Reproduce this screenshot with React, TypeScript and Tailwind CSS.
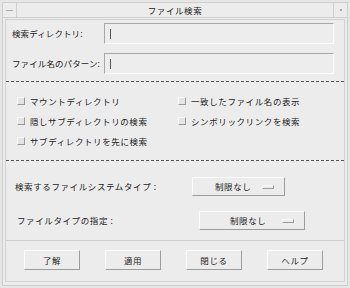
import React from 'react'

const font = { fontFamily: '"Noto Sans CJK JP", "Noto Sans", sans-serif' }

const Check = ({ label }: { label: string }) => (
  <div className="flex items-center h-[20px]">
    <span className="w-[8px] h-[8px] shrink-0 border border-t-[#fafafa] border-l-[#fafafa] border-b-[#9a9a9a] border-r-[#9a9a9a] bg-[#e4e4e4]" />
    <span className="ml-[5px] whitespace-nowrap text-[8.5px] tracking-[0.6px] text-[#222]">{label}</span>
  </div>
)

const Field = ({ label }: { label: string }) => (
  <div className="flex items-center h-[21px]">
    <span className="w-[92px] shrink-0 whitespace-nowrap text-[8.5px] tracking-[0.1px] text-[#222]">{label}</span>
    <div className="flex-1 h-full flex items-center pl-[5px] border border-t-[#a8a8a8] border-l-[#a8a8a8] border-b-[#fcfcfc] border-r-[#fcfcfc] bg-[#ededed]">
      <span className="w-px h-[10px] bg-[#555]" />
    </div>
  </div>
)

const OptionButton = ({ w, pl }: { w: string; pl: string }) => (
  <div className={`${w} ${pl} shrink-0 h-[19px] flex items-center justify-between pr-[10px] border border-t-[#fcfcfc] border-l-[#fcfcfc] border-b-[#9c9c9c] border-r-[#9c9c9c] bg-[#ececec]`}>
    <span className="whitespace-nowrap text-[8.5px] tracking-[0.6px] text-[#222]">制限なし</span>
    <span className="w-[12px] h-[4px] border border-t-[#fcfcfc] border-l-[#fcfcfc] border-b-[#9c9c9c] border-r-[#9c9c9c]" />
  </div>
)

const Btn = ({ label }: { label: string }) => (
  <div className="w-[56px] h-[20px] shrink-0 flex items-center justify-center border border-t-[#fcfcfc] border-l-[#fcfcfc] border-b-[#9c9c9c] border-r-[#9c9c9c] bg-[#ececec] text-[8.5px] tracking-[0.6px] text-[#222]">
    {label}
  </div>
)

const Dash = () => <div className="border-t border-dashed border-[#555]" />

export default function App() {
  return (
    <div style={font} className="w-[350px] h-[288px] bg-[#e6e6e6] p-[2px]">
      <div className="w-full h-full border border-[#cfcfcf] bg-[#ececec] flex flex-col">
        <div className="flex h-[15px] border-b border-[#cfcfcf]">
          <div className="w-[14px] border-r border-[#cfcfcf] flex items-center justify-center">
            <span className="w-[7px] h-px bg-[#aaa]" />
          </div>
          <div className="flex-1 flex items-center justify-center text-[8.5px] tracking-[0.6px] text-[#222]">ファイル検索</div>
          <div className="w-[14px] border-l border-[#cfcfcf] flex items-center justify-center">
            <span className="w-[2px] h-[2px] bg-[#aaa]" />
          </div>
        </div>
        <div className="flex-1 mx-[2px] mt-[1px] mb-[3px] border border-[#d2d2d2] flex flex-col">
          <div className="pl-[6px] pr-[10px] pt-[3px] flex flex-col gap-[9px]">
            <Field label="検索ディレクトリ:" />
            <Field label="ファイル名のパターン:" />
          </div>
          <div className="mt-[7px]"><Dash /></div>
          <div className="flex pl-[11px] pt-[9px]">
            <div className="w-[161px] flex flex-col">
              <Check label="マウントディレクトリ" />
              <Check label="隠しサブディレクトリの検索" />
              <Check label="サブディレクトリを先に検索" />
            </div>
            <div className="flex flex-col">
              <Check label="一致したファイル名の表示" />
              <Check label="シンボリックリンクを検索" />
            </div>
          </div>
          <div className="mt-[9px]"><Dash /></div>
          <div className="flex items-center mt-[16px] pl-[9px]">
            <span className="w-[177px] shrink-0 whitespace-nowrap text-[8.5px] tracking-[0.6px] text-[#222]">検索するファイルシステムタイプ :</span>
            <OptionButton w="w-[93px]" pl="pl-[22px]" />
          </div>
          <div className="flex items-center mt-[15px] pl-[11px]">
            <span className="w-[182px] shrink-0 whitespace-nowrap text-[8.5px] tracking-[0.6px] text-[#222]">ファイルタイプの指定 :</span>
            <OptionButton w="w-[106px]" pl="pl-[30px]" />
          </div>
          <div className="mt-[10px] border-t border-[#cfcfcf]" />
          <div className="flex gap-[25px] pl-[18px] mt-[9px]">
            <Btn label="了解" />
            <Btn label="適用" />
            <Btn label="閉じる" />
            <Btn label="ヘルプ" />
          </div>
        </div>
      </div>
    </div>
  )
}
